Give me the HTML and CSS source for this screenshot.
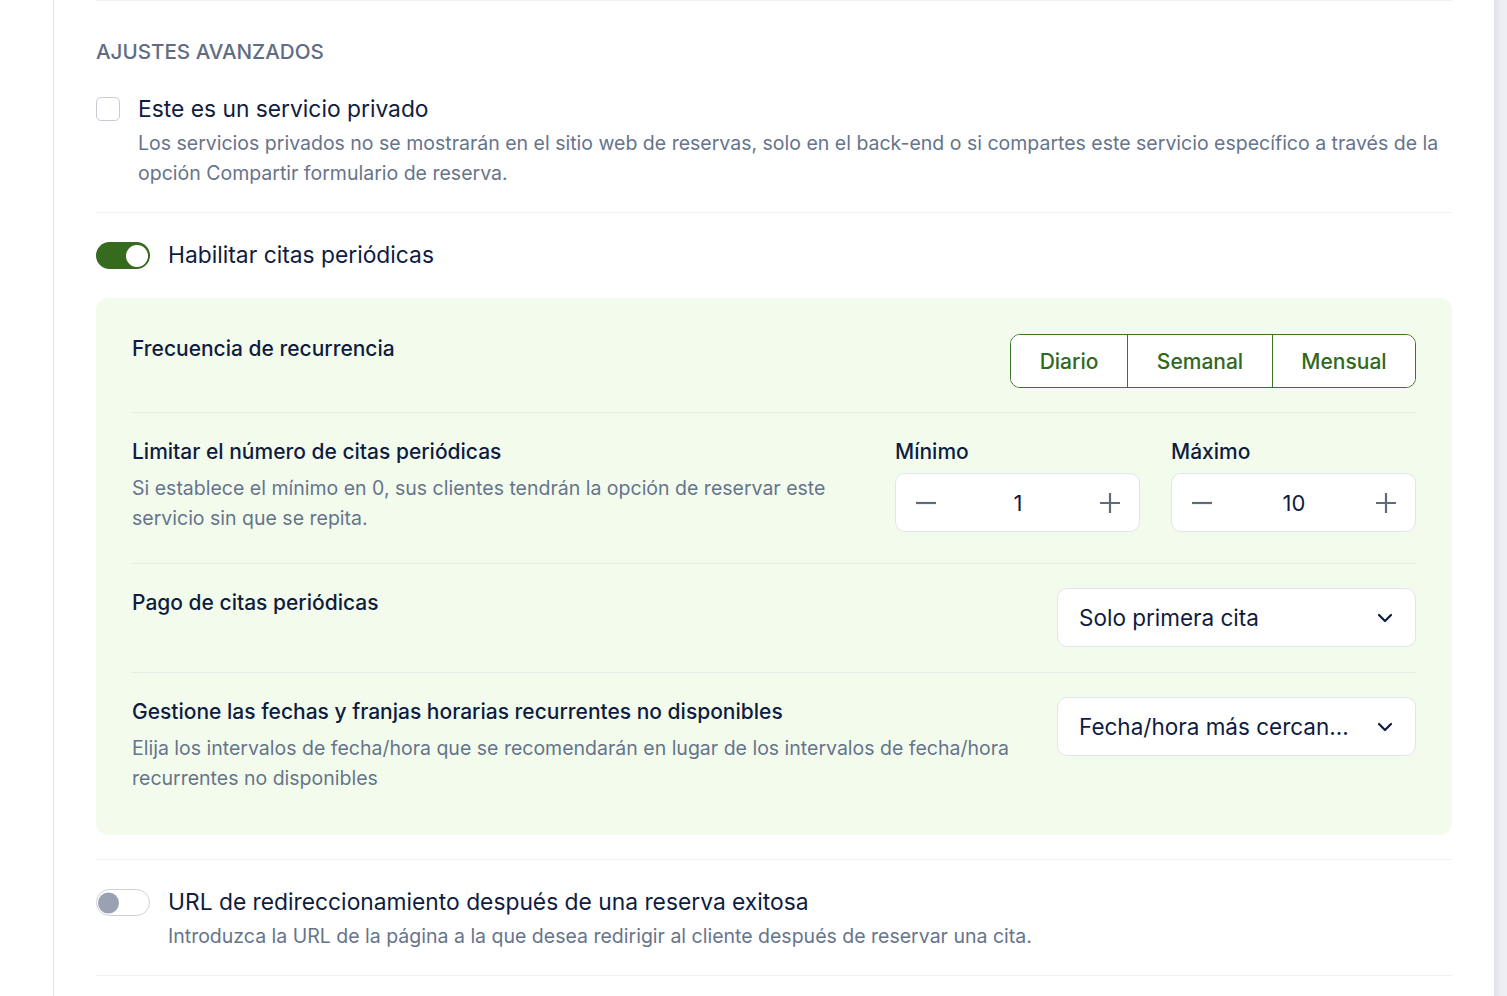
FILE: index.html
```html
<!DOCTYPE html>
<html lang="es">
<head>
<meta charset="utf-8">
<title>Ajustes avanzados</title>
<link rel="stylesheet" href="styles.css">
</head>
<body>
<div class="page">
  <div class="gutter"></div>
  <main class="main">
    <section class="block block-title">
      <h2 class="section-title">AJUSTES AVANZADOS</h2>
      <div class="option">
        <span class="checkbox"></span>
        <div class="option-text">
          <div class="option-label">Este es un servicio privado</div>
          <p class="desc">Los servicios privados no se mostrarán en el sitio web de reservas, solo en el back-end o si compartes este servicio específico a través de la opción Compartir formulario de reserva.</p>
        </div>
      </div>
    </section>

    <section class="block block-recurring">
      <div class="option option-toggle">
        <span class="toggle on"><span class="knob"></span></span>
        <div class="option-text">
          <div class="option-label">Habilitar citas periódicas</div>
        </div>
      </div>

      <div class="panel">
        <div class="row row-freq">
          <div class="row-text">
            <div class="row-label">Frecuencia de recurrencia</div>
          </div>
          <div class="segmented">
            <button class="seg seg-diario">Diario</button>
            <button class="seg seg-semanal">Semanal</button>
            <button class="seg seg-mensual">Mensual</button>
          </div>
        </div>

        <div class="row row-limit">
          <div class="row-text">
            <div class="row-label">Limitar el número de citas periódicas</div>
            <p class="desc">Si establece el mínimo en 0, sus clientes tendrán la opción de reservar este servicio sin que se repita.</p>
          </div>
          <div class="steppers">
            <div class="stepper-field">
              <div class="field-label">Mínimo</div>
              <div class="stepper">
                <span class="step-btn"><svg width="20" height="20" viewBox="0 0 20 20"><path d="M0 10h20" stroke="#5f6a7d" stroke-width="2.2" fill="none"/></svg></span>
                <span class="step-value">1</span>
                <span class="step-btn"><svg width="20" height="20" viewBox="0 0 20 20"><path d="M0 10h20M10 0v20" stroke="#5f6a7d" stroke-width="2.2" fill="none"/></svg></span>
              </div>
            </div>
            <div class="stepper-field">
              <div class="field-label">Máximo</div>
              <div class="stepper">
                <span class="step-btn"><svg width="20" height="20" viewBox="0 0 20 20"><path d="M0 10h20" stroke="#5f6a7d" stroke-width="2.2" fill="none"/></svg></span>
                <span class="step-value">10</span>
                <span class="step-btn"><svg width="20" height="20" viewBox="0 0 20 20"><path d="M0 10h20M10 0v20" stroke="#5f6a7d" stroke-width="2.2" fill="none"/></svg></span>
              </div>
            </div>
          </div>
        </div>

        <div class="row row-pay">
          <div class="row-text">
            <div class="row-label">Pago de citas periódicas</div>
          </div>
          <div class="select">
            <span class="select-value">Solo primera cita</span>
            <svg class="chevron" width="16" height="10" viewBox="0 0 16 10"><path d="M2 2l6 6 6-6" stroke="#0f1c3f" stroke-width="2.2" fill="none" stroke-linecap="round" stroke-linejoin="round"/></svg>
          </div>
        </div>

        <div class="row row-dates">
          <div class="row-text">
            <div class="row-label">Gestione las fechas y franjas horarias recurrentes no disponibles</div>
            <p class="desc">Elija los intervalos de fecha/hora que se recomendarán en lugar de los intervalos de fecha/hora recurrentes no disponibles</p>
          </div>
          <div class="select">
            <span class="select-value">Fecha/hora más cercan...</span>
            <svg class="chevron" width="16" height="10" viewBox="0 0 16 10"><path d="M2 2l6 6 6-6" stroke="#0f1c3f" stroke-width="2.2" fill="none" stroke-linecap="round" stroke-linejoin="round"/></svg>
          </div>
        </div>
      </div>
    </section>

    <section class="block block-url">
      <div class="option option-toggle">
        <span class="toggle off"><span class="knob"></span></span>
        <div class="option-text">
          <div class="option-label">URL de redireccionamiento después de una reserva exitosa</div>
          <p class="desc">Introduzca la URL de la página a la que desea redirigir al cliente después de reservar una cita.</p>
        </div>
      </div>
    </section>
  </main>
  <div class="scrollbar"></div>
</div>
</body>
</html>
```

FILE: styles.css
```css
* { box-sizing: border-box; }

html, body {
  margin: 0;
  padding: 0;
  background: #ffffff;
}

body {
  font-family: Inter, "Noto Sans", "Liberation Sans", sans-serif;
  color: #0f1c3f;
  overflow: hidden;
}

.page {
  display: flex;
  height: 996px;
  overflow: hidden;
}

.gutter {
  width: 54px;
  flex: none;
  border-right: 1px solid #e2e3e8;
}

.scrollbar {
  width: 13px;
  flex: none;
  background: linear-gradient(to right, #dfe0eb, #eceef4 60%, #eef0f5);
}

.main {
  flex: 1;
  padding: 0 42px 0 42px;
}

.block {
  border-top: 1px solid #eff1f4;
}

.block-title {
  padding: 39px 0 24px;
}

.section-title {
  margin: 0;
  font-size: 20.6px;
  line-height: 24px;
  font-weight: 500;
  color: #5f6c84;
}

.option {
  display: flex;
  align-items: flex-start;
  gap: 18px;
}

.block-title .option {
  margin-top: 31px;
}

.checkbox {
  flex: none;
  width: 24px;
  height: 24px;
  margin-top: 2px;
  border: 1.5px solid #c6cbd6;
  border-radius: 5px;
  background: #fff;
}

.option-label {
  font-size: 22.8px;
  line-height: 30px;
  font-weight: 400;
  color: #0f1c3f;
}

.block-title .option-label {
  margin-top: -1px;
}

.desc {
  margin: 4px 0 0;
  font-size: 19.5px;
  line-height: 30px;
  color: #66748b;
}

.block-recurring {
  padding: 27px 0 24px;
}

.toggle {
  position: relative;
  flex: none;
  width: 54px;
  height: 27px;
  border-radius: 14px;
  margin-top: 2px;
}

.toggle .knob {
  position: absolute;
  top: 50%;
  width: 22px;
  height: 22px;
  border-radius: 50%;
  transform: translateY(-50%);
}

.toggle.on {
  background: #356a1f;
}

.toggle.on .knob {
  right: 2px;
  background: #ffffff;
}

.toggle.off {
  background: #ffffff;
  border: 1px solid #cdd1da;
}

.toggle.off .knob {
  left: 1px;
  width: 21px;
  height: 21px;
  background: #9aa1b2;
}

.panel {
  margin-top: 28px;
  background: #f3fcec;
  border-radius: 12px;
  padding: 12px 36px 36px;
}

.row {
  display: flex;
  align-items: flex-start;
  justify-content: space-between;
  gap: 32px;
  padding: 24px 0 24px;
  border-top: 1px solid #e7ece6;
}

.row:first-child {
  border-top: none;
}

.row-limit { padding-bottom: 30px; }
.row-pay { padding-bottom: 25px; }
.row-dates { padding-bottom: 6px; gap: 24px; }

.row-text {
  flex: 1;
  min-width: 0;
}

.row-label {
  font-size: 21px;
  line-height: 30px;
  font-weight: 500;
  color: #0f1c3f;
}

.row-text .desc {
  margin-top: 6px;
}

.segmented {
  display: flex;
  flex: none;
  height: 54px;
  border: 1.5px solid #3b7424;
  border-radius: 10px;
  overflow: hidden;
  background: #ffffff;
}

.seg {
  font-family: inherit;
  font-size: 21px;
  font-weight: 500;
  color: #2f6a1c;
  background: #ffffff;
  border: none;
  height: 100%;
  padding: 0;
  cursor: pointer;
}

.seg + .seg {
  border-left: 1.5px solid #3b7424;
}

.seg-diario { width: 116px; }
.seg-semanal { width: 145px; }
.seg-mensual { width: 143px; }

.steppers {
  display: flex;
  gap: 31px;
  flex: none;
}

.stepper-field {
  width: 245px;
}

.field-label {
  font-size: 21px;
  line-height: 30px;
  font-weight: 500;
  color: #0f1c3f;
}

.stepper {
  margin-top: 6px;
  height: 59px;
  display: flex;
  align-items: center;
  justify-content: space-between;
  padding: 0 19px 0 20px;
  background: #ffffff;
  border: 1px solid #e1e5ea;
  border-radius: 10px;
}

.step-btn {
  display: flex;
  width: 20px;
  height: 20px;
}

.step-value {
  font-size: 22px;
  color: #0f1c3f;
}

.select {
  flex: none;
  width: 359px;
  height: 59px;
  display: flex;
  align-items: center;
  justify-content: space-between;
  padding: 0 22px 0 21px;
  background: #ffffff;
  border: 1px solid #e1e5ea;
  border-radius: 10px;
}

.select-value {
  font-size: 22.5px;
  color: #0f1c3f;
  white-space: nowrap;
}

.chevron {
  flex: none;
}

.block-url {
  padding: 27px 0 24px;
  border-bottom: 1px solid #eff1f4;
}

.block-url .desc {
  margin-top: 4px;
}
```
